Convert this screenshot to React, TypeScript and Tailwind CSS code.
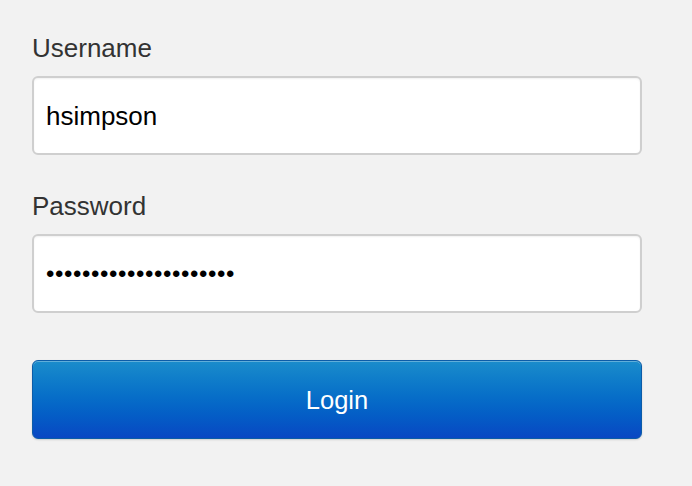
import React from "react";

export default function App() {
  const font = { fontFamily: '"Liberation Sans", Arial, sans-serif' };
  return (
    <div className="min-h-[486px] w-[692px] bg-[#f2f2f2] pt-[34px] px-[32px]" style={font}>
      <div className="w-[610px] flex flex-col">
        <label className="text-[26px] leading-[28px] text-[#333333]">Username</label>
        <div className="mt-[14px] h-[79px] rounded-[6px] border-2 border-[#cfcfcf] bg-white shadow-[inset_0_1px_2px_rgba(0,0,0,0.06)] flex items-center pl-[12px]">
          <span className="text-[26px] text-black leading-[30px]">hsimpson</span>
        </div>
        <label className="mt-[37px] text-[26px] leading-[28px] text-[#333333]">Password</label>
        <div className="mt-[14px] h-[79px] rounded-[6px] border-2 border-[#cfcfcf] bg-white shadow-[inset_0_1px_2px_rgba(0,0,0,0.06)] flex items-center pl-[12px]">
          <span className="text-[24px] text-black leading-[30px] tracking-[0.6px]">{"•••••••••••••••••••••"}</span>
        </div>
        <button className="mt-[47px] h-[79px] rounded-[6px] border border-[#0c5ca8] bg-gradient-to-b from-[#1a8ccb] to-[#0a47c3] shadow-[inset_0_1px_0_rgba(255,255,255,0.3),0_1px_2px_rgba(0,0,0,0.15)] flex items-center justify-center text-white text-[25.5px] leading-[30px]">
          Login
        </button>
      </div>
    </div>
  );
}
